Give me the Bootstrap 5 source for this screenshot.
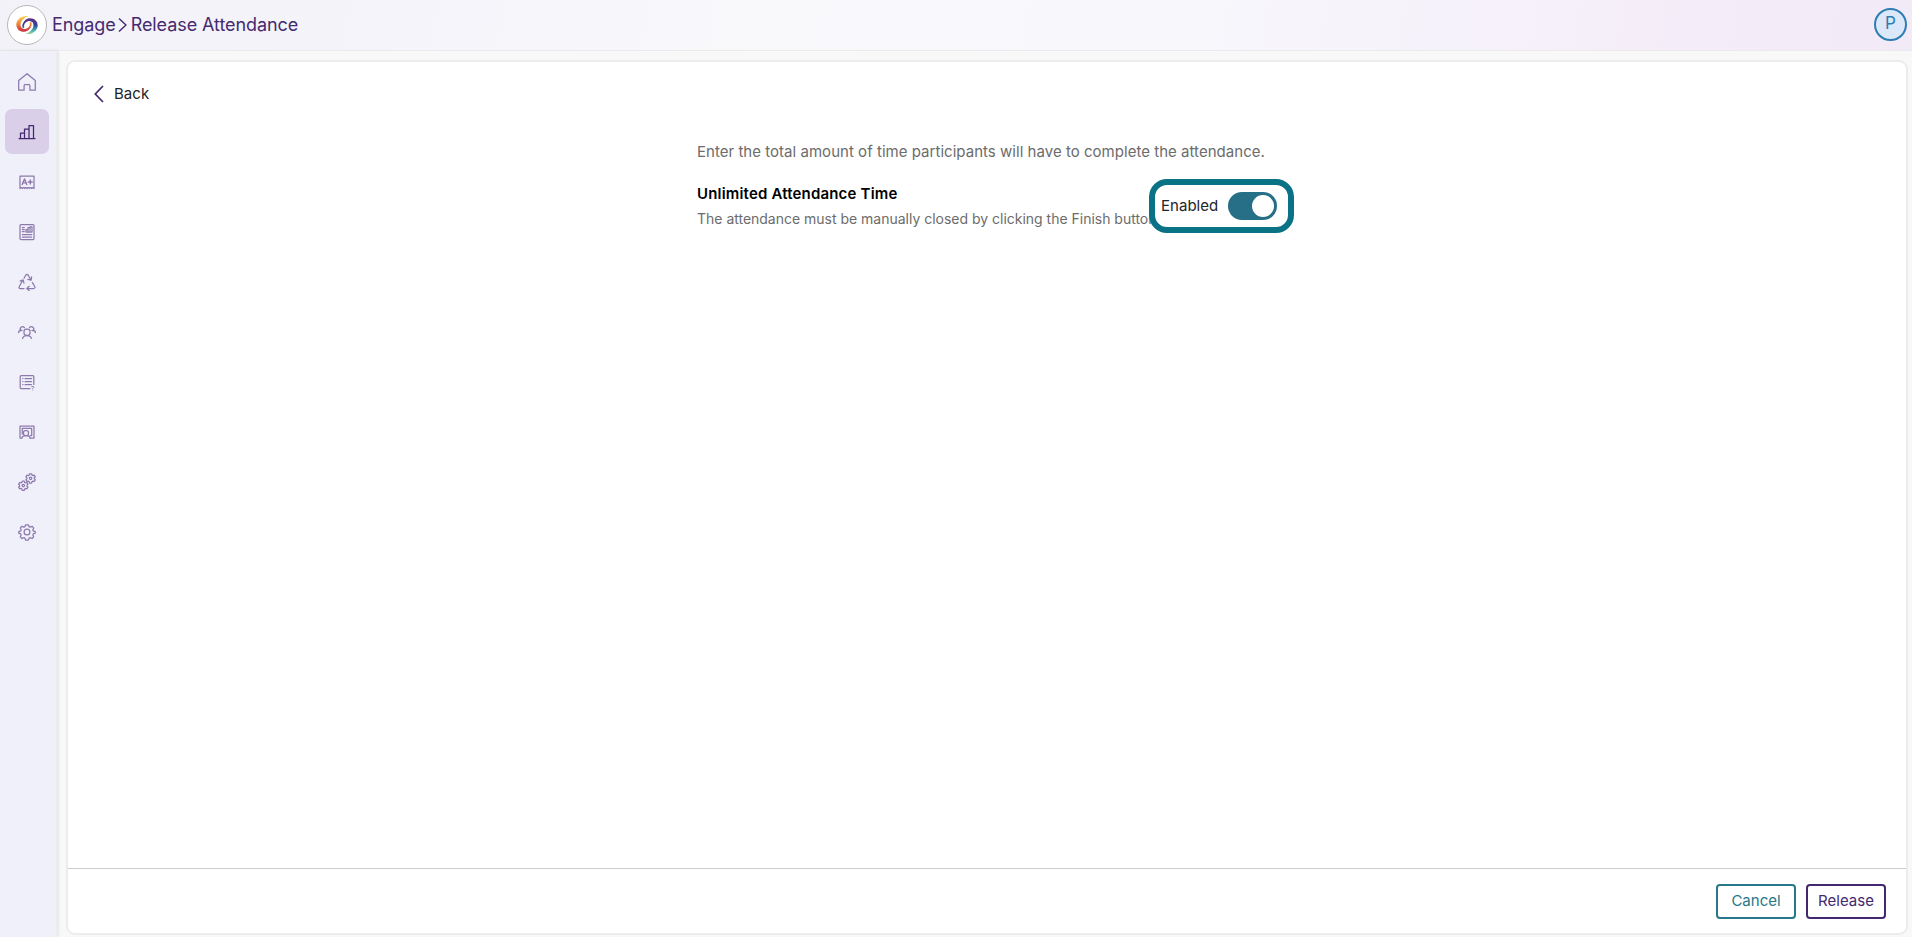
<!DOCTYPE html>
<html lang="en">
<head>
<meta charset="utf-8">
<meta name="viewport" content="width=device-width, initial-scale=1">
<title>Release Attendance</title>
<link rel="stylesheet" href="https://cdn.jsdelivr.net/npm/bootstrap@5.3.0/dist/css/bootstrap.min.css">
<style>
body{font-family:Inter,"Liberation Sans",sans-serif;font-size:15px;letter-spacing:.03px;color:#212529;background:#f8f8f8;overflow:hidden}
.topbar{height:51px;padding:0 5px 0 7px;border-bottom:1px solid #ebebeb;background:linear-gradient(100deg,#f3f2f8 0%,#f4f4fa 20%,#f9f9fc 40%,#f8f8fc 60%,#f4edf9 88%,#f2ebf7 100%)}
.logo{width:40px;height:40px;border:1px solid #b8b8b8;background:#fff}
.crumbs{font-size:18px;line-height:24px;color:#452a70;letter-spacing:-.08px;margin-left:5px}
.avatar{width:33px;height:33px;border:2px solid #2d7db3;background:#dbe8fa;color:#2d7db3;font-size:17px;margin-bottom:2px}
.side{width:57px;background:#f0f0fa;border-right:1px solid #eee;box-shadow:1px 0 3px #ddd;padding:8px 0 0 5px}
.side a{width:44px;height:45px;margin-bottom:5px;border-radius:7px;color:#8d79ac}
.side a.active{background:#d9cfe9;color:#44286f}
.side svg{width:18px;height:18px;fill:none;stroke:currentColor;stroke-width:1.25;stroke-linejoin:round;stroke-linecap:round}
.panel{margin:9px 4px 2px 9px;border:2px solid #ececec;border-radius:9px;background:#fff}
.back{margin:20px 0 0 26px;line-height:24px;color:#212529}
.release-form{width:584px;margin:34px 0 0 629px}
.hint{color:#6c6c6c;line-height:24px}
.opt-title{font-weight:600;color:#000;line-height:22px;margin-top:19px;letter-spacing:.18px}
.opt-note{font-size:14px;color:#6c6c6c;line-height:22px;margin-top:3px;white-space:nowrap;letter-spacing:-.01px}
.toggle-box{position:absolute;left:452px;top:39px;width:145px;height:54px;border:6px solid #0a7285;border-radius:18px;background:#fff;padding:0 11px 0 6px}
.toggle-box .form-check-input{width:49px;height:28px;margin:0;background:#266f86;border:0;border-radius:14px;position:relative;background-image:none!important}
.toggle-box .form-check-input::after{content:"";position:absolute;right:3px;top:3px;width:22px;height:22px;border-radius:50%;background:#fff}
.foot{height:65px;border-top:1px solid #ccc;padding:0 20px 0 0;gap:10px}
.foot .btn{width:80px;height:35px;padding:0;border-width:2px;border-radius:4px;font-size:15px;line-height:30px}
.btn-cancel{color:#27788a;border-color:#27788a}
.btn-release{color:#44286f;border-color:#44286f}
</style>
</head>
<body>
<div class="vh-100 d-flex flex-column">
<header class="topbar d-flex align-items-center flex-shrink-0">
  <div class="logo rounded-circle d-flex align-items-center justify-content-center">
    <svg width="22" height="20" viewBox="0 0 22 20" fill="none" stroke-linecap="round">
      <defs>
        <linearGradient id="warm" gradientUnits="userSpaceOnUse" x1="9" y1="0" x2="9" y2="19"><stop stop-color="#fbdf62"/><stop offset=".45" stop-color="#ed8a3b"/><stop offset=".8" stop-color="#d23a40"/><stop offset="1" stop-color="#b93a5c"/></linearGradient>
        <linearGradient id="cool" gradientUnits="userSpaceOnUse" x1="13" y1="2" x2="13" y2="20"><stop stop-color="#6e2c83"/><stop offset=".45" stop-color="#33429b"/><stop offset=".75" stop-color="#4ab3b6"/><stop offset="1" stop-color="#b5dc7b"/></linearGradient>
      </defs>
      <path d="M12.300 1.200C6.500-.4.400 4.200.300 9.500c0 5.200 4.700 8.100 8.800 7.200 2.500-.6 4.300-2 5-4.200-2.600 1.800-6.300 2.100-8.200.4C2.600 10.200 5.500 3.500 12.300 1.200Z" fill="url(#warm)"/>
      <path d="M9.700 18.800c5.800 1.600 11.900-3 12-8.300 0-5.200-4.700-8.100-8.800-7.200-2.500.6-4.300 2-5 4.200 2.600-1.800 6.300-2.100 8.200-.4 3.300 2.700.4 9.400-6.400 11.700Z" fill="url(#cool)"/>
      <path d="M7.300 12.200C6.500 9 8.800 5.700 12.600 5" stroke="url(#cool)" stroke-width="1.800"/>
      <path d="M14.700 7.800C15.500 11 13.200 14.300 9.400 15" stroke="url(#warm)" stroke-width="1.800"/>
    </svg>
  </div>
  <div class="crumbs d-flex align-items-center"><span>Engage</span>
    <svg style="margin:0 4px 0 2px" width="9" height="16" viewBox="0 0 9 16" fill="none" stroke="currentColor" stroke-width="1.5"><path d="M1 1.500 8 8 1 14.500"/></svg>
    <span>Release Attendance</span></div>
  <div class="avatar rounded-circle ms-auto d-flex align-items-center justify-content-center">P</div>
</header>
<div class="d-flex flex-grow-1" style="min-height:0">
  <nav class="side flex-shrink-0">
    <a class="d-flex align-items-center justify-content-center" href="#"><svg viewBox="0 0 18 18"><path d="M.7 7.600 9 .7l8.300 6.900v9.600h-5.400v-4.400a1.400 1.400 0 0 0-1.400-1.300h-3a1.400 1.400 0 0 0-1.400 1.300v4.400H.7Z"/></svg></a>
    <a class="active d-flex align-items-center justify-content-center" href="#"><svg viewBox="0 0 18 18"><path d="M1 15.500h16M2.500 15.500v-5.500h4v5.500M6.500 15.500v-9.500h4.500v9.500M11 15.500v-13h4.500v13"/></svg></a>
    <a class="d-flex align-items-center justify-content-center" href="#"><svg viewBox="0 0 18 18"><path d="M2 15.500V3h14v12.500M2 15.500q1.200-1.800 2.400 0 1.200-1.800 2.300 0 1.200-1.800 2.300 0 1.200-1.800 2.300 0 1.200-1.800 2.400 0 1.100-1.800 2.300 0"/><path stroke-width="1.400" d="M4.200 11.500l2.300-5.500 2.300 5.500M5.300 9.900h2.400M10.300 9h4M12.300 7v4"/></svg></a>
    <a class="d-flex align-items-center justify-content-center" href="#"><svg viewBox="0 0 18 18"><rect x="2" y="1.500" width="14" height="15" rx="1"/><path d="M4.300 4.500h2M4.300 6.500h2M4.300 8.500h2M8 9V6.500h2V9M10 9V4.500h2V9M12 9V3.800h2V9M8 9h6M4.300 11.500h9.400M4.300 14h9.400"/></svg></a>
    <a class="d-flex align-items-center justify-content-center" href="#"><svg viewBox="0 0 18 18"><path d="M6 5.200 7.800 2.200q1.200-1.500 2.400 0l2.600 4.500M13.600 3.900l-.5 3.300-3.200-.8M4.800 7.200l-3.500 6.300q-.8 2 1 2H6M2.100 8.100l3-1.200.9 3.200M14.400 9.600l2.300 3.900q.8 2-1.200 2H9M11.200 13.300l-2.400 2.200 2.400 2.200"/></svg></a>
    <a class="d-flex align-items-center justify-content-center" href="#"><svg viewBox="0 0 18 18"><rect x="6" y="6" width="6" height="6.300" rx="2.300"/><path d="M4.600 15.500q.5-3 4.400-3t4.400 3M2.700 7.400A2.300 2.300 0 1 1 6.400 4.600M.6 9.600q0-2.200 3.400-2.200M15.300 7.400a2.300 2.300 0 1 0-3.700-2.800M17.400 9.600q0-2.200-3.400-2.200"/></svg></a>
    <a class="d-flex align-items-center justify-content-center" href="#"><svg viewBox="0 0 18 18"><path d="M12 15.500H3.200q-1 0-1-1v-11q0-1 1-1h11.600q1 0 1 1v8M4.700 5.500h.3M4.700 8.500h.3M4.700 11.500h.3M7 5.500h6.500M7 8.500h6.500M7 11.500h6.500"/><path stroke-width="1" d="M13.700 13.700q2.600-.5 2.300.5l-1.200 1.200M14.800 17v.1"/></svg></a>
    <a class="d-flex align-items-center justify-content-center" href="#"><svg viewBox="0 0 18 18"><path d="M3.500 15H2V3h14v12h-4M4.300 11V5.300h9.400v7.200h-1.500"/><rect x="5.500" y="7.500" width="5" height="5" rx="1.900"/><path d="M4 15q.2-2.400 4-2.400t4 2.400"/></svg></a>
    <a class="d-flex align-items-center justify-content-center" href="#"><svg viewBox="0 0 18 18"><g id="cog"><path d="M11.600.800h2l.4 1.300 1 .5 1.300-.4 1 1.700-1 .9v1.100l1 .9-1 1.700-1.300-.4-1 .6-.4 1.300h-2l-.4-1.300-1-.6-1.300.4-1-1.700 1-.9V4.800l-1-.9 1-1.700 1.300.4 1-.5Z"/><circle cx="12.600" cy="5.300" r="1.200"/></g><use href="#cog" x="-7.300" y="7.300"/></svg></a>
    <a class="d-flex align-items-center justify-content-center" href="#"><svg viewBox="0 0 18 18"><circle cx="9" cy="9" r="2.900"/><path d="M7.600 1.800h2.800l.7 1.900 1 .4 2-.8 1.600 1.600-.8 2 .4 1 1.900.7v1.600l-1.900.7-.4 1 .8 2-1.600 1.600-2-.8-1 .4-.7 1.900H7.600l-.7-1.900-1-.4-2 .8-1.600-1.600.8-2-.4-1-1.900-.7V8.600l1.900-.7.4-1-.8-2 1.600-1.600 2 .8 1-.4Z"/></svg></a>
  </nav>
  <main class="panel flex-grow-1 d-flex flex-column">
    <div class="back d-flex align-items-center"><svg width="10" height="18" viewBox="0 0 10 18" fill="none" stroke="#44286f" stroke-width="1.700"><path d="M9 1 1.300 9 9 17"/></svg><span style="margin-left:10px">Back</span></div>
    <div class="release-form position-relative">
      <div class="hint">Enter the total amount of time participants will have to complete the attendance.</div>
      <div class="opt-title">Unlimited Attendance Time</div>
      <div class="opt-note">The attendance must be manually closed by clicking the Finish button.</div>
      <div class="toggle-box form-switch d-flex align-items-center justify-content-between"><label for="unlimited">Enabled</label><input class="form-check-input" type="checkbox" role="switch" id="unlimited" checked></div>
    </div>
    <footer class="foot mt-auto d-flex align-items-center justify-content-end">
      <button class="btn btn-cancel" type="button">Cancel</button><button class="btn btn-release" type="button">Release</button>
    </footer>
  </main>
</div>
</div>
<script src="https://cdn.jsdelivr.net/npm/bootstrap@5.3.0/dist/js/bootstrap.bundle.min.js"></script>
</body>
</html>
